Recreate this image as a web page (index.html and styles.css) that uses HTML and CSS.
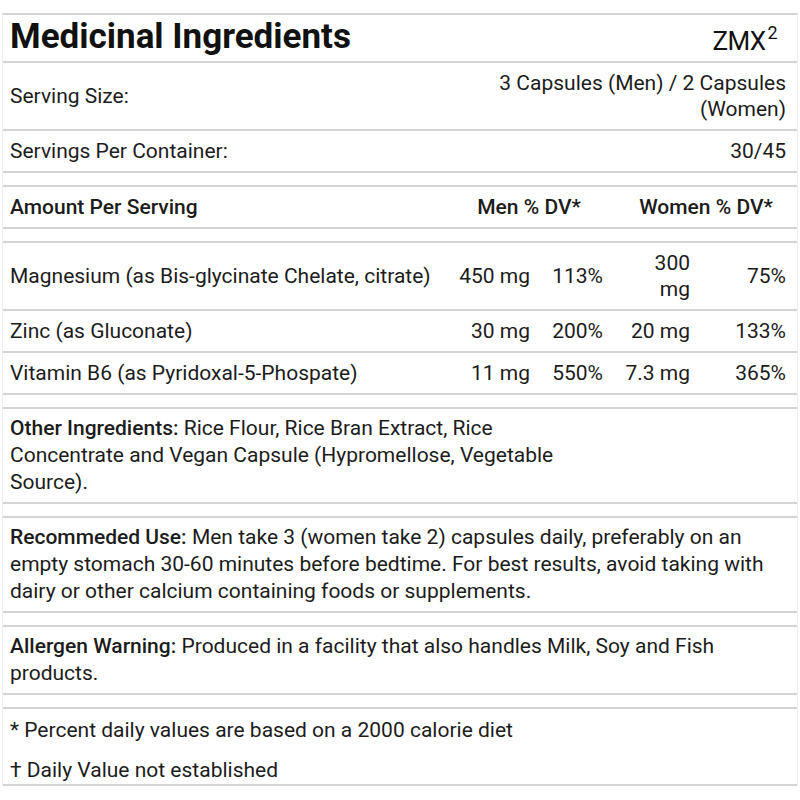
FILE: index.html
```html
<!DOCTYPE html>
<html lang="en">
<head>
<meta charset="utf-8">
<title>Medicinal Ingredients</title>
<link rel="stylesheet" href="styles.css">
</head>
<body>
<div class="label">
  <section class="block">
    <div class="row title-row">
      <h1 class="title">Medicinal Ingredients</h1>
      <span class="brand">ZMX<sup>2</sup></span>
    </div>
    <div class="row">
      <span class="key">Serving Size:</span>
      <span class="val val-wrap">3 Capsules (Men) / 2 Capsules (Women)</span>
    </div>
    <div class="row">
      <span class="key">Servings Per Container:</span>
      <span class="val">30/45</span>
    </div>
  </section>

  <section class="block">
    <table class="facts">
      <colgroup><col class="c1"><col class="c2"><col class="c3"><col class="c4"><col class="c5"></colgroup>
      <tr class="head">
        <th class="name">Amount Per Serving</th>
        <th colspan="2">Men % DV*</th>
        <th colspan="2">Women % DV*</th>
      </tr>
    </table>
  </section>

  <section class="block">
    <table class="facts">
      <colgroup><col class="c1"><col class="c2"><col class="c3"><col class="c4"><col class="c5"></colgroup>
      <tr>
        <td class="name">Magnesium (as Bis-glycinate Chelate, citrate)</td>
        <td class="amt">450 mg</td>
        <td class="pct">113%</td>
        <td class="amt w">300 mg</td>
        <td class="pct w">75%</td>
      </tr>
      <tr>
        <td class="name">Zinc (as Gluconate)</td>
        <td class="amt">30 mg</td>
        <td class="pct">200%</td>
        <td class="amt w">20 mg</td>
        <td class="pct w">133%</td>
      </tr>
      <tr>
        <td class="name">Vitamin B6 (as Pyridoxal-5-Phospate)</td>
        <td class="amt">11 mg</td>
        <td class="pct">550%</td>
        <td class="amt w">7.3 mg</td>
        <td class="pct w">365%</td>
      </tr>
    </table>
  </section>

  <section class="block text-block">
    <p class="narrow"><strong>Other Ingredients: </strong>Rice Flour, Rice Bran Extract, Rice Concentrate and Vegan Capsule (Hypromellose, Vegetable Source).</p>
  </section>

  <section class="block text-block">
    <p><strong>Recommeded Use: </strong>Men take 3 (women take 2) capsules daily, preferably on an empty stomach 30-60 minutes before bedtime. For best results, avoid taking with dairy or other calcium containing foods or supplements.</p>
  </section>

  <section class="block text-block">
    <p><strong>Allergen Warning: </strong>Produced in a facility that also handles Milk, Soy and Fish products.</p>
  </section>

  <section class="block notes">
    <p>* Percent daily values are based on a 2000 calorie diet</p>
    <p>† Daily Value not established</p>
  </section>
</div>
</body>
</html>
```

FILE: styles.css
```css
html, body {
  margin: 0;
  padding: 0;
  background: #ffffff;
}

body {
  font-family: Roboto, "Liberation Sans", sans-serif;
  color: #1c1c1c;
  font-size: 21px;
  line-height: 26px;
}

.label {
  margin: 13px 2px 0;
  border-left: 1px solid #ededed;
  border-right: 1px solid #ededed;
}

.block {
  border-top: 2px solid #d4d4d4;
  border-bottom: 2px solid #d4d4d4;
}

.block + .block {
  margin-top: 12px;
}

.row {
  display: flex;
  justify-content: space-between;
  align-items: center;
  padding: 7px 11px 7px 7px;
}

.row + .row {
  border-top: 2px solid #d4d4d4;
}

.title-row {
  padding-top: 5px;
  padding-bottom: 5px;
  align-items: flex-start;
}

.title {
  margin: 0;
  font-size: 35px;
  line-height: 34px;
  font-weight: 700;
  letter-spacing: 0;
  color: #111;
}

.brand {
  font-size: 26px;
  line-height: 30px;
  letter-spacing: -0.6px;
  padding-top: 6px;
  margin-right: 9px;
  color: #111;
}

.brand sup {
  font-size: 18px;
  line-height: 0;
  vertical-align: 11px;
  margin-left: 2px;
}

.val {
  text-align: right;
}

.val-wrap {
  max-width: 312px;
}

.facts {
  width: 100%;
  border-collapse: collapse;
  table-layout: fixed;
}

.c1 { width: 440px; }
.c2 { width: 95px; }
.c3 { width: 77px; }
.c4 { width: 83px; }

.facts td,
.facts th {
  padding: 7px 8px;
  vertical-align: middle;
  font-weight: 400;
}

.facts tr + tr td {
  border-top: 2px solid #d4d4d4;
}

.facts th {
  font-weight: 500;
  text-align: center;
}

.facts .name {
  text-align: left;
  padding-left: 7px;
}

.facts .amt {
  text-align: right;
}

.facts .pct {
  text-align: right;
  padding-right: 12px;
}

.facts .amt.w {
  padding-left: 8px;
}

.facts .pct.w {
  padding-right: 11px;
}

.text-block {
  padding: 6px 11px 6px 7px;
}

.text-block p,
.notes p {
  margin: 0;
  line-height: 27px;
}

.text-block strong {
  font-weight: 500;
}

.narrow {
  max-width: 556px;
}

.notes {
  padding: 8px 11px 0 7px;
}

.notes p + p {
  margin-top: 13px;
}
```
